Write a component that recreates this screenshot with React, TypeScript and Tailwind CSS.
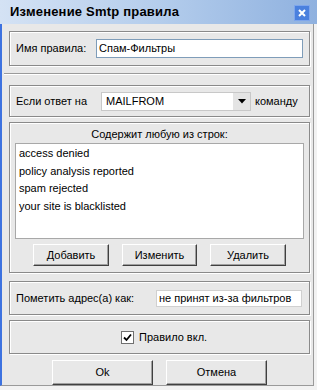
const font = { fontFamily: '"Liberation Sans", Arial, sans-serif' }

function Group({ className = "", children }: { className?: string; children: React.ReactNode }) {
  return (
    <div
      className={`border border-[#8a8a8a] shadow-[inset_1px_1px_0_#fff,1px_1px_0_#fff] ${className}`}
    >
      {children}
    </div>
  )
}

function Button({ label, className = "" }: { label: string; className?: string }) {
  return (
    <div
      className={`flex items-center justify-center bg-[#e8e8e8] border border-t-[#fff] border-l-[#fff] border-r-[#404040] border-b-[#404040] shadow-[inset_-1px_-1px_0_#a0a0a0] text-[11px] text-black ${className}`}
    >
      {label}
    </div>
  )
}

export default function App() {
  const lines = [
    "access denied",
    "policy analysis reported",
    "spam rejected",
    "your site is blacklisted",
  ]

  return (
    <div className="w-[317px] h-[390px] bg-[#f2f2f2] overflow-hidden" style={font}>
      {/* Title bar */}
      <div className="h-[24px] flex items-center justify-between pl-[10px] pr-[7px] bg-gradient-to-r from-[#d4e2f4] via-[#b4cdec] to-[#8fb1df]">
        <span className="text-[13px] font-bold text-black tracking-[0.2px]">Изменение Smtp правила</span>
        <div className="w-[16px] h-[16px] mt-[2px] bg-[#4a80de] border border-[#7ea6ec] flex items-center justify-center">
          <svg width="8" height="8" viewBox="0 0 8 8">
            <path d="M1 1L7 7M7 1L1 7" stroke="#fff" strokeWidth="2" />
          </svg>
        </div>
      </div>

      {/* Client area */}
      <div className="h-[362px] bg-[#e8e8e8] border-l-2 border-l-[#3d72e0] border-r border-r-[#9a9a9a] border-b border-b-[#9a9a9a] w-[314px] pl-[7px] pr-[3px] pt-[7px] flex flex-col text-[11px] text-black">
        <Group className="h-[35px] flex items-center pl-[6px] pr-[6px]">
          <span className="w-[80px]">Имя правила:</span>
          <div className="flex-1 h-[19px] bg-white border border-[#7f9db9] flex items-center pl-[2px]">
            Спам-Фильтры
          </div>
        </Group>

        {/* separator */}
        <div className="-ml-[5px] mt-[7px] h-[2px] border-t border-t-[#9a9a9a] border-b border-b-white" />

        <Group className="mt-[10px] h-[32px] flex items-center pl-[6px] pr-[6px]">
          <span className="w-[85px]">Если ответ на</span>
          <div className="w-[150px] h-[19px] bg-white border border-[#c8c8c8] flex items-center justify-between pl-[4px]">
            <span>MAILFROM</span>
            <div className="w-[17px] h-[17px] bg-[#e4e4e4] flex items-center justify-center">
              <svg width="8" height="5" viewBox="0 0 8 5">
                <path d="M0 0H8L4 4.5Z" fill="#000" />
              </svg>
            </div>
          </div>
          <span className="ml-[4px]">команду</span>
        </Group>

        <Group className="mt-[5px] h-[151px] flex flex-col px-[5px]">
          <div className="h-[20px] flex items-center justify-center pt-[3px]">Содержит любую из строк:</div>
          <div className="h-[96px] bg-white border border-[#a8a8a8] flex flex-col pt-[1px] pl-[3px]">
            {lines.map((l) => (
              <div key={l} className="h-[17.5px] leading-[17px]">
                {l}
              </div>
            ))}
          </div>
          <div className="mt-[5px] flex pl-[18px] gap-[13px]">
            <Button label="Добавить" className="w-[76px] h-[22px]" />
            <Button label="Изменить" className="w-[75px] h-[22px]" />
            <Button label="Удалить" className="w-[76px] h-[22px]" />
          </div>
        </Group>

        <Group className="mt-[8px] h-[34px] flex items-center pl-[6px] pr-[7px]">
          <span className="w-[140px]">Пометить адрес(а) как:</span>
          <div className="flex-1 h-[17px] bg-white border border-[#d0d0d0] flex items-center pl-[2px]">
            не принят из-за фильтров
          </div>
        </Group>

        <Group className="mt-[5px] h-[34px] flex items-center pl-[111px]">
          <div className="w-[13px] h-[13px] bg-white border border-[#707070] flex items-center justify-center">
            <svg width="9" height="9" viewBox="0 0 9 9">
              <path d="M1 4.5L3.5 7L8 1.5" stroke="#000" strokeWidth="1.8" fill="none" />
            </svg>
          </div>
          <span className="ml-[5px]">Правило вкл.</span>
        </Group>

        <div className="mt-[6px] flex pl-[43px] gap-[13px]">
          <Button label="Ok" className="w-[101px] h-[25px]" />
          <Button label="Отмена" className="w-[101px] h-[25px]" />
        </div>
      </div>
    </div>
  )
}
